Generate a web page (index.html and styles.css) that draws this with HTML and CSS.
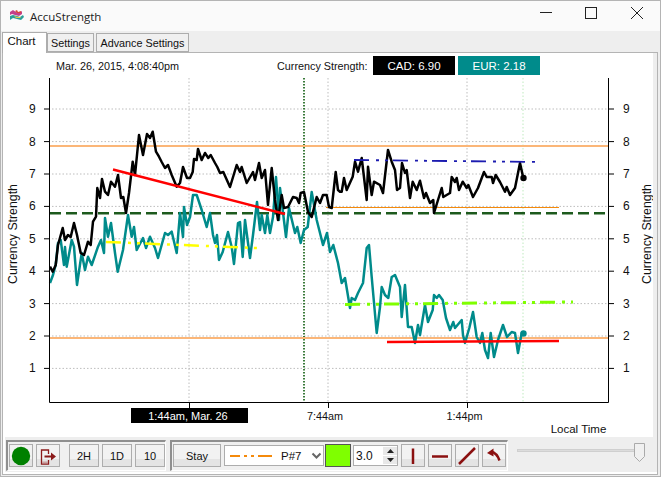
FILE: index.html
```html
<!DOCTYPE html>
<html lang="en">
<head>
<meta charset="utf-8">
<title>AccuStrength</title>
<link rel="stylesheet" href="styles.css">
</head>
<body>
<div class="window">
  <header class="titlebar">
    <svg class="app-icon" width="16" height="14" viewBox="0 0 16 14">
      <path d="M1 3 L4 1 L7 3 L10 4 L13 2 L13 5 L10 7 L6 6 L3 5 L1 6Z" fill="#c2408a"/>
      <path d="M6 2 L8 1 L9 3 L12 2 L12 4 L8 4Z" fill="#d8453c"/>
      <path d="M1 7 L4 6 L8 7 L11 8 L14 6 L15 8 L12 11 L8 10 L4 9 L1 11Z" fill="#2a9d98"/>
      <path d="M5 7 L9 8 L12 8 L11 9 L7 9Z" fill="#d6c94a"/>
    </svg>
    <span class="app-title">AccuStrength</span>
    <div class="win-controls">
      <svg class="win-btn" width="46" height="24" viewBox="0 0 46 24"><path d="M18 12.500H30" stroke="#222" fill="none"/></svg>
      <svg class="win-btn" width="46" height="24" viewBox="0 0 46 24"><rect x="17.500" y="7.500" width="11" height="11" stroke="#222" fill="none"/></svg>
      <svg class="win-btn" width="46" height="24" viewBox="0 0 46 24"><path d="M17 7L29 19M29 7L17 19" stroke="#222" fill="none"/></svg>
    </div>
  </header>

  <nav class="tabs">
    <span class="tab tab-active">Chart</span>
    <span class="tab tab-settings">Settings</span>
    <span class="tab tab-advance">Advance Settings</span>
  </nav>

  <main class="pane">
    <div class="sheet">
      <div class="chart-head">
        <span class="stamp">Mar. 26, 2015, 4:08:40pm</span>
        <span class="cs-label">Currency Strength:</span>
        <span class="badge badge-cad">CAD: 6.90</span>
        <span class="badge badge-eur">EUR: 2.18</span>
      </div>

      <svg class="chart" width="650" height="361" viewBox="3 76 650 361">
        <g class="grid">
          <path d="M52 109H608M52 141.600H608M52 174H608M52 206.400H608M52 238.800H608M52 271.200H608M52 303.600H608M52 336H608M52 368.400H608"/>
          <path d="M189 78V402M328 78V402M467 78V402"/>
        </g>
        <path class="grid-light" d="M523 78V402"/>
        <path class="now-line" d="M304 78V402"/>

        <path class="band" d="M50 146H608"/>
        <path class="band" d="M50 338H608"/>
        <path class="thin-orange" d="M326 207.500H559"/>
        <path class="mid-dash" d="M50 213.300H608"/>

        <polyline class="line teal" points="50,283 53,275 55.700,265 58,243 60.700,240 64,265 65,247 66.700,266.700 71.700,240 74,246.700 77,285 81.700,253 85,270 88,256.700 91.700,265 98,246.700 101,240 104,253 105,218 108,236.700 111,223 115,253 117.700,271.700 123,250 128,215 131.700,236.700 134,227 136.700,250 143,238 146,248 150,236.700 155,248 158,258 165,233 168,235 171.700,231.700 176.700,253 180,213 183,237 184,207 187,225 190,217 193,195 196.700,195 201.700,210 206.700,227 210,213 213,235 215,243 217,235 219,260 222.700,252 228,232 231.700,247 234,264 238,223 240,222 242.700,257 245,220 250,258 253,235 257,202 260,230 261.700,215 265,233 267.300,215 270,233 273,217 276,177 279,220 280,188 286,237 289,208 295,233 297.300,227 300.700,243 304,230 307.700,227 311.700,192 316.700,220 320,233 323,245 327,233 330,252 333.300,245 338,263 341.700,283 345,278 350,308 351.700,298 355,300 358,293 363,283 366.700,248 369,245 371.700,277 376.700,333 380,307 381.700,287 385,295 388.300,298 391.700,277 395,275 400,287 401.700,317 405,285 408,327 411.700,327 415,343 418,325 420,335 425,305 428,322 432.700,310 434,295 436.700,298 439,295 442.700,300 446,318 450,330 453.300,322 455,328 461.700,320 463,335 465,343 469.300,328 473,312 476.700,337 480,343 482.300,333 485,350 488,358 490.700,333 494,357 498,340 503,325 507,337 511.700,332 515,333 518,353 521.700,333 523,333"/>
        <polyline class="line black" points="50,266.700 52.700,271.700 55.700,265 58,245 62.700,228 65,240 68,235 70.700,237 74,223 77,235 80.700,253 84,255 88,241.700 90.700,245 93,221.700 96,216.700 97.300,188 100,198 102,179 105,191.700 108,195 111,181.700 115,186.700 118,175 121,198 123.300,197 126,213 129,193 132.700,161.700 135,175 139,135 143,155 147,134 150,138 152.700,131.700 156,151.700 159,156.700 161.700,162 165,168 168,165 171.700,175 176.700,186.700 180,183 183,167 187,178 190,178 192.700,172 194,159 196.700,160 198,149 201.700,160 205,153 208.300,158 210.700,155 215,163 217.300,167 220,173 223.300,172 230,187 236.700,165 240,172 241.700,167 246.700,183 253,172 255,180 259,163 261.700,178 265,170 268,205 271.700,168 275,200 278,220 281.700,195 284,208 288,207 293,197 296.700,198 299,203 300.700,193 304,192 308,212 311.700,217 316.700,197 320,203 323,195 326.700,195 329,207 331.700,208 335.700,172 338,190 340,191.700 341.700,191.700 344,178 346.700,190 352.700,176.700 355,161.700 358,171.700 361.700,158 366.700,200 368,166.700 371.700,195 374,181.700 380,185 383,193 388,150 391.700,161.700 395,170 397,190 400,188 402,163 405,173 406.700,170 410,198 412.700,181.700 416.700,190 420,180.700 424,198 426,193 430,203 433.300,200 434,213 441.700,188 443.300,197 450,193 451.700,177 455,182 456.700,178 459,190 462.700,181.700 466.700,188 468.300,185 473,197 478,188 484,172 486.700,177 491.700,177 493,183 495.700,175 500,182 505,191.700 506.700,187 510,195 515,188 520,163 523.300,178"/>

        <path class="trend-red" d="M113 169.500L285 214"/>
        <path class="trend-yellow" d="M106 242L257 248"/>
        <path class="trend-blue" d="M354 160L541 162"/>
        <path class="trend-lime" d="M345 304.500L573 302"/>
        <path class="trend-red" d="M387 342L559 341"/>

        <circle class="dot-black" cx="523.500" cy="178" r="3.200"/>
        <circle class="dot-teal" cx="523.500" cy="333.500" r="3.200"/>

        <path class="axis" d="M49.500 78V402.500H608.500V78"/>
        <path class="axis" d="M44 109H49.500M44 141.600H49.500M44 174H49.500M44 206.400H49.500M44 238.800H49.500M44 271.200H49.500M44 303.600H49.500M44 336H49.500M44 368.400H49.500"/>
        <path class="axis" d="M608.500 109H614M608.500 141.600H614M608.500 174H614M608.500 206.400H614M608.500 238.800H614M608.500 271.200H614M608.500 303.600H614M608.500 336H614M608.500 368.400H614"/>
        <path class="axis" d="M189.500 402V408M328.500 402V408M467.500 402V408"/>

        <g class="tick-text">
          <text x="29" y="113">9</text><text x="29" y="146">8</text><text x="29" y="178">7</text><text x="29" y="210">6</text><text x="29" y="243">5</text><text x="29" y="275">4</text><text x="29" y="308">3</text><text x="29" y="340">2</text><text x="29" y="372">1</text>
          <text x="623" y="113">9</text><text x="623" y="146">8</text><text x="623" y="178">7</text><text x="623" y="210">6</text><text x="623" y="243">5</text><text x="623" y="275">4</text><text x="623" y="308">3</text><text x="623" y="340">2</text><text x="623" y="372">1</text>
        </g>
        <text class="axis-title" transform="translate(17 234) rotate(-90)">Currency Strength</text>
        <text class="axis-title" transform="translate(651 234) rotate(-90)">Currency Strength</text>

        <rect class="cursor-box" x="131" y="408" width="117" height="15"/>
        <text class="cursor-text" x="188" y="420">1:44am, Mar. 26</text>
        <text class="tick-text-x" x="325" y="420">7:44am</text>
        <text class="tick-text-x" x="464.500" y="420">1:44pm</text>
        <text class="local-time" x="578.500" y="433">Local Time</text>
      </svg>
    </div>

    <footer class="toolbar">
      <div class="group group-left">
        <button class="btn btn-icon">
          <svg width="20" height="20" viewBox="0 0 20 20"><circle cx="10" cy="10" r="9.200" fill="#008000"/></svg>
        </button>
        <button class="btn btn-icon">
          <svg width="18" height="18" viewBox="0 0 18 18"><path d="M9.500 7V3H2.500V17H9.500V13" fill="none" stroke="#8b1a1a" stroke-width="1.300"/><path d="M3 15.500H9" stroke="#c9a0a0" stroke-width="2"/><path d="M5.500 9.500H13" stroke="#8b1a1a" stroke-width="2"/><path d="M12 5.500L17 9.500L12 13.500Z" fill="#8b1a1a"/></svg>
        </button>
        <button class="btn btn-range btn-first">2H</button>
        <button class="btn btn-range">1D</button>
        <button class="btn btn-range">10</button>
      </div>
      <div class="group group-right">
        <button class="btn btn-stay">Stay</button>
        <div class="combo">
          <svg width="44" height="4" viewBox="0 0 44 4"><path d="M0 2H10M14 2H17M21 2H24M28 2H42" stroke="#f58a0b" stroke-width="2" fill="none"/></svg>
          <span class="combo-text">P#7</span>
          <svg class="chev" width="11" height="7" viewBox="0 0 11 7"><path d="M1.500 1.500L5.500 5.500L9.500 1.500" stroke="#666" stroke-width="2" fill="none"/></svg>
        </div>
        <div class="swatch"></div>
        <div class="spin">
          <span class="spin-value">3.0</span>
          <div class="spin-arrows">
            <span class="spin-btn"><svg width="7" height="4" viewBox="0 0 7 4"><path d="M0 4L3.500 0L7 4Z" fill="#222"/></svg></span>
            <span class="spin-btn"><svg width="7" height="4" viewBox="0 0 7 4"><path d="M0 0L3.500 4L7 0Z" fill="#222"/></svg></span>
          </div>
        </div>
        <button class="btn btn-tool"><svg width="18" height="18" viewBox="0 0 18 18"><path d="M9 1.500V17" stroke="#8b1010" stroke-width="2.500"/></svg></button>
        <button class="btn btn-tool"><svg width="18" height="18" viewBox="0 0 18 18"><path d="M1 9.500H17" stroke="#8b1010" stroke-width="2.500"/></svg></button>
        <button class="btn btn-tool"><svg width="18" height="18" viewBox="0 0 18 18"><path d="M1 17L17 1" stroke="#8b1010" stroke-width="2.500"/></svg></button>
        <button class="btn btn-tool"><svg width="18" height="18" viewBox="0 0 18 18"><path d="M6 4.500Q12 6 14.500 13.500" stroke="#8b1010" stroke-width="2.500" fill="none"/><path d="M2 6L8.500 1.500L8.500 9.500Z" fill="#8b1010"/></svg></button>
      </div>
      <div class="slider">
        <div class="slider-track"></div>
        <svg class="slider-thumb" width="11" height="19" viewBox="0 0 11 19"><path d="M.5 .5H10.500V13.500L5.500 18.500L.5 13.500Z" fill="#f0f0f0" stroke="#aaa"/></svg>
      </div>
    </footer>
  </main>
</div>
</body>
</html>
```
FILE: styles.css
```css
* { box-sizing: border-box; }
html, body { margin: 0; padding: 0; }
body { width: 661px; height: 477px; overflow: hidden; font-family: "Liberation Sans", Arial, sans-serif; font-size: 10.800px; color: #111; background: #eee; }

.window { width: 661px; height: 477px; display: flex; flex-direction: column; border: 1px solid #b4b4b4; background: #eee; }

.titlebar { height: 30px; flex: none; display: flex; align-items: center; background: #fafafa; padding-left: 8px; }
.app-icon { flex: none; margin-right: 5px; }
.app-title { font-family: "Open Sans", sans-serif; font-size: 11.500px; color: #222; }
.win-controls { margin-left: auto; display: flex; margin-top: -9px; }
.win-btn { display: block; }

.tabs { height: 21px; flex: none; display: flex; align-items: flex-end; padding-left: 1px; background: #eee; position: relative; z-index: 1; }
.tab { height: 19px; border: 1px solid #adadad; background: #f0f0f0; display: flex; align-items: center; justify-content: center; white-space: nowrap; }
.tab-active { height: 21px; width: 45px; margin-bottom: -1px; background: #fff; border-bottom: 0; padding: 0 6px 4px 0; font-size: 11.500px; }
.tab-settings { width: 47px; margin-right: 2px; }
.tab-advance { width: 93px; }

.pane { flex: 1; min-height: 0; margin: 0 2px 1px 1px; border: 1px solid #b4b4b4; background: #eee; display: flex; flex-direction: column; }
.sheet { margin-right: 4px; background: #fff; flex: none; }

.chart-head { height: 23px; display: flex; align-items: center; padding-top: 2px; }
.stamp { margin-left: 53px; width: 221px; white-space: nowrap; }
.cs-label { width: 96px; white-space: nowrap; }
.badge { width: 82px; height: 19px; display: flex; align-items: center; justify-content: center; color: #fff; margin-right: 3px; font-size: 11.500px; }
.badge-cad { background: #000; }
.badge-eur { background: #008b8b; }

.chart { display: block; }
.grid path { stroke: #bdbdbd; stroke-width: 1; stroke-dasharray: 1.500 2; fill: none; }
.grid-light { stroke: #bfeabf; stroke-width: 1; stroke-dasharray: 1.500 2; fill: none; }
.now-line { stroke: #0b5a0b; stroke-width: 1.600; stroke-dasharray: 1.500 1.500; fill: none; }
.band { stroke: #fbb678; stroke-width: 2; fill: none; }
.thin-orange { stroke: #f58a0b; stroke-width: 1; fill: none; }
.mid-dash { stroke: #1d5a1d; stroke-width: 2.600; stroke-dasharray: 11 5; fill: none; }
.line { fill: none; stroke-width: 2.500; stroke-linejoin: round; }
.teal { stroke: #008b8b; }
.black { stroke: #000; }
.trend-red { stroke: #f00; stroke-width: 2.500; fill: none; }
.trend-yellow { stroke: #ffff00; stroke-width: 2.500; stroke-dasharray: 15 7 3 6 3 5; fill: none; }
.trend-blue { stroke: #1c1cb0; stroke-width: 1.800; stroke-dasharray: 15 7 3 6 3 5; fill: none; }
.trend-lime { stroke: #7fff00; stroke-width: 3; stroke-dasharray: 15 7 3 6 3 5; fill: none; }
.dot-black { fill: #000; }
.dot-teal { fill: #008b8b; }
.axis { stroke: #000; stroke-width: 1; fill: none; }

.tick-text text { font-size: 12px; fill: #111; }
.axis-title { font-size: 12.300px; fill: #111; text-anchor: middle; }
.cursor-box { fill: #000; }
.cursor-text { font-size: 11px; fill: #fff; text-anchor: middle; }
.tick-text-x { font-size: 10.800px; fill: #111; text-anchor: middle; }
.local-time { font-size: 11.500px; fill: #111; text-anchor: middle; }

.toolbar { height: 37px; flex: none; display: flex; background: #eee; padding: 3px 0 0 1px; border-left: 2px solid #fff; border-bottom: 2px solid #fff; }
.group { height: 31px; display: flex; align-items: flex-start; border-top: 2px solid #8f8f8f; border-left: 2px solid #8f8f8f; border-right: 1px solid #fff; border-bottom: 1px solid #fff; padding: 2px 0 0 1px; gap: 3px; background: #f0f0f0; flex: none; }
.group-left { width: 160px; margin-right: 4px; }
.group-right { width: 338px; }
.btn { height: 23px; padding: 0; border: 1px solid #adadad; background: linear-gradient(#f2f2f2 65%, #e4e4e4 65%); font: 11px "Liberation Sans", Arial, sans-serif; color: #111; display: flex; align-items: center; justify-content: center; }
.btn-icon { width: 24px; }
.btn-range { width: 30px; }
.btn-first { margin-left: 6px; }
.btn-stay { width: 48px; }
.btn-tool { width: 24px; }
.combo { width: 100px; height: 21px; margin-top: 1px; border: 1px solid #adadad; background: #fff; display: flex; align-items: center; padding-left: 5px; font-size: 11.500px; }
.combo-text { margin-left: 7px; }
.chev { margin-left: auto; margin-right: 1px; }
.swatch { width: 26px; height: 23px; margin-left: -2px; margin-right: -1px; background: #7fff00; border: 1px solid #555; }
.spin { width: 45px; height: 21px; margin-top: 1px; border: 1px solid #adadad; background: #fff; display: flex; }
.spin-value { flex: 1; padding: 3px 0 0 2px; font-size: 12px; }
.spin-arrows { width: 14px; display: flex; flex-direction: column; gap: 1px; padding: 1px 0; }
.spin-btn { flex: 1; background: #e8e8e8; display: flex; align-items: center; justify-content: center; }
.spin-btn svg { display: block; }

.slider { position: relative; width: 136px; height: 29px; margin-left: 9px; flex: none; }
.slider-track { margin-top: 9px; height: 3px; background: #dcdcdc; border: 1px solid #cfcfcf; width: 120px; }
.slider-thumb { position: absolute; left: 117px; top: 3px; display: block; }
```
